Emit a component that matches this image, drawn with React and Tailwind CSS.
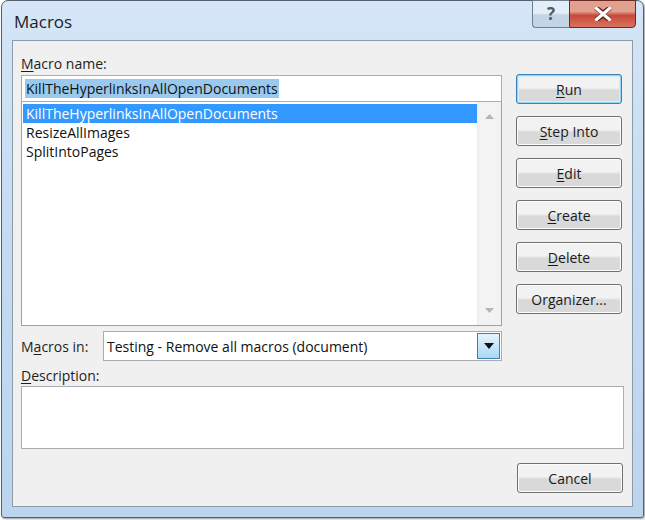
import { useState } from 'react';

const FONT = { fontFamily: '"Open Sans", "Noto Sans", "Liberation Sans", sans-serif' };

const Btn = ({ label, u, rest, focused, className = '' }) => (
  <button
    className={`h-[30px] w-[106px] rounded-[3px] border text-[14px] text-[#1b1b1b] ${
      focused
        ? 'border-[#3c7fb1] shadow-[inset_0_0_0_1px_#95d6f7,inset_0_0_0_2px_#d3edfb]'
        : 'border-[#707070] shadow-[inset_0_0_0_1px_#fcfcfc]'
    } bg-gradient-to-b from-[#f2f2f2] from-45% to-[#d9d9d9] to-55% ${className}`}
  >
    <span className="underline underline-offset-2 decoration-1">{u}</span>
    {rest}
  </button>
);

const Arrow = ({ up }) => (
  <svg width="9" height="5" viewBox="0 0 9 5">
    <path d={up ? 'M0 5 L4.5 0 L9 5 Z' : 'M0 0 L4.5 5 L9 0 Z'} fill="#b5b5b5" />
  </svg>
);

export default function App() {
  const [selected, setSelected] = useState(0);
  const macros = ['KillTheHyperlinksInAllOpenDocuments', 'ResizeAllImages', 'SplitIntoPages'];

  return (
    <div style={FONT} className="w-[645px] h-[520px] bg-white">
      <div className="w-[643px] h-[518px] ml-[1px] rounded-t-[7px] rounded-b-[3px] border border-[#55606c] bg-gradient-to-b from-[#d4e6f7] via-[#c3daf2] to-[#bcd5ef] flex flex-col shadow-[1px_1px_2px_rgba(0,0,0,0.4)]">
        {/* title bar */}
        <div className="h-[39px] flex items-start justify-between shrink-0">
          <div className="pl-[12px] pt-[8px] text-[17px] text-[#1e1e1e]">Macros</div>
          <div className="flex mr-[7px] -mt-px">
            <div className="w-[37px] h-[28px] rounded-bl-[4px] border border-[#6f7e90] border-r-0 bg-gradient-to-b from-[#e4eef8] from-45% to-[#c3d4e6] to-55% flex items-center justify-center text-[17px] font-bold text-[#4d5a6a]">
              ?
            </div>
            <div className="w-[67px] h-[28px] rounded-br-[4px] border border-[#6b2a22] bg-gradient-to-b from-[#e2a090] from-40% via-[#c9483a] via-55% to-[#d8725e] flex items-center justify-center">
              <svg width="18" height="14" viewBox="0 0 18 14">
                <path d="M2 1 L9 6 L16 1 M2 13 L9 8 L16 13" stroke="#5b1d16" strokeWidth="5" fill="none" />
                <path d="M2.5 1.5 L15.5 12.5 M15.5 1.5 L2.5 12.5" stroke="#ffffff" strokeWidth="3.2" strokeLinecap="round" />
              </svg>
            </div>
          </div>
        </div>

        {/* client area */}
        <div className="mx-[10px] mb-[10px] flex-1 border border-[#8d9aa8] bg-[#f0f0f0] pl-[8px] pr-[10px] pt-[12px] flex flex-col">
          <div className="flex gap-[14px]">
            {/* left column */}
            <div className="w-[482px] flex flex-col">
              <div className="h-[21px] text-[14px] text-[#1e1e1e] leading-[21px]">
                <span className="underline underline-offset-2">M</span>acro name:
              </div>
              <div className="h-[27px] mt-[1px] border border-[#abadb3] bg-white flex items-center pl-[3px]">
                <span className="bg-[#99c9ef] text-[14px] text-[#111] leading-[19px] px-px">{macros[0]}</span>
              </div>
              <div className="h-[224px] border border-[#a0a0a0] border-t-0 bg-white flex">
                <div className="flex-1 pt-[2px] pl-[1px]">
                  {macros.map((m, i) => (
                    <div
                      key={m}
                      onClick={() => setSelected(i)}
                      className={`h-[19px] leading-[19px] pl-[3px] text-[14px] ${
                        selected === i ? 'bg-[#3399ff] text-white' : 'text-[#111]'
                      }`}
                    >
                      {m}
                    </div>
                  ))}
                </div>
                <div className="w-[24px] bg-[#f3f3f3] border-l border-[#ececec] flex flex-col items-center justify-between pt-[12px] pb-[12px]">
                  <Arrow up />
                  <Arrow />
                </div>
              </div>
              <div className="mt-[5px] flex items-center">
                <div className="w-[82px] text-[14px] text-[#1e1e1e]">
                  M<span className="underline underline-offset-2">a</span>cros in:
                </div>
                <div className="flex-1 h-[30px] border border-[#abadb3] bg-white flex items-center justify-between">
                  <span className="pl-[3px] text-[14px] text-[#111]">Testing - Remove all macros (document)</span>
                  <div className="w-[23px] h-[26px] mr-[1px] border border-[#3c7fb1] bg-gradient-to-b from-[#e5f4fc] to-[#a8d8f5] flex items-center justify-center">
                    <svg width="10" height="6" viewBox="0 0 10 6">
                      <path d="M0 0 L5 6 L10 0 Z" fill="#111" />
                    </svg>
                  </div>
                </div>
              </div>
            </div>

            {/* right column */}
            <div className="flex flex-col gap-[12px] pt-[21px]">
              <Btn focused u="R" rest="un" />
              <Btn u="S" rest="tep Into" />
              <Btn u="E" rest="dit" />
              <Btn u="C" rest="reate" />
              <Btn u="D" rest="elete" />
              <Btn u="" rest="Organizer..." />
            </div>
          </div>

          <div className="mt-[4px] h-[21px] leading-[21px] text-[14px] text-[#1e1e1e]">
            <span className="underline underline-offset-2">D</span>escription:
          </div>
          <div className="mt-[0px] mr-[-2px] h-[63px] border border-[#abadb3] bg-white" />

          <div className="mt-[14px] flex justify-end">
            <Btn u="" rest="Cancel" className="mr-[-1px]" />
          </div>
        </div>
      </div>
    </div>
  );
}
